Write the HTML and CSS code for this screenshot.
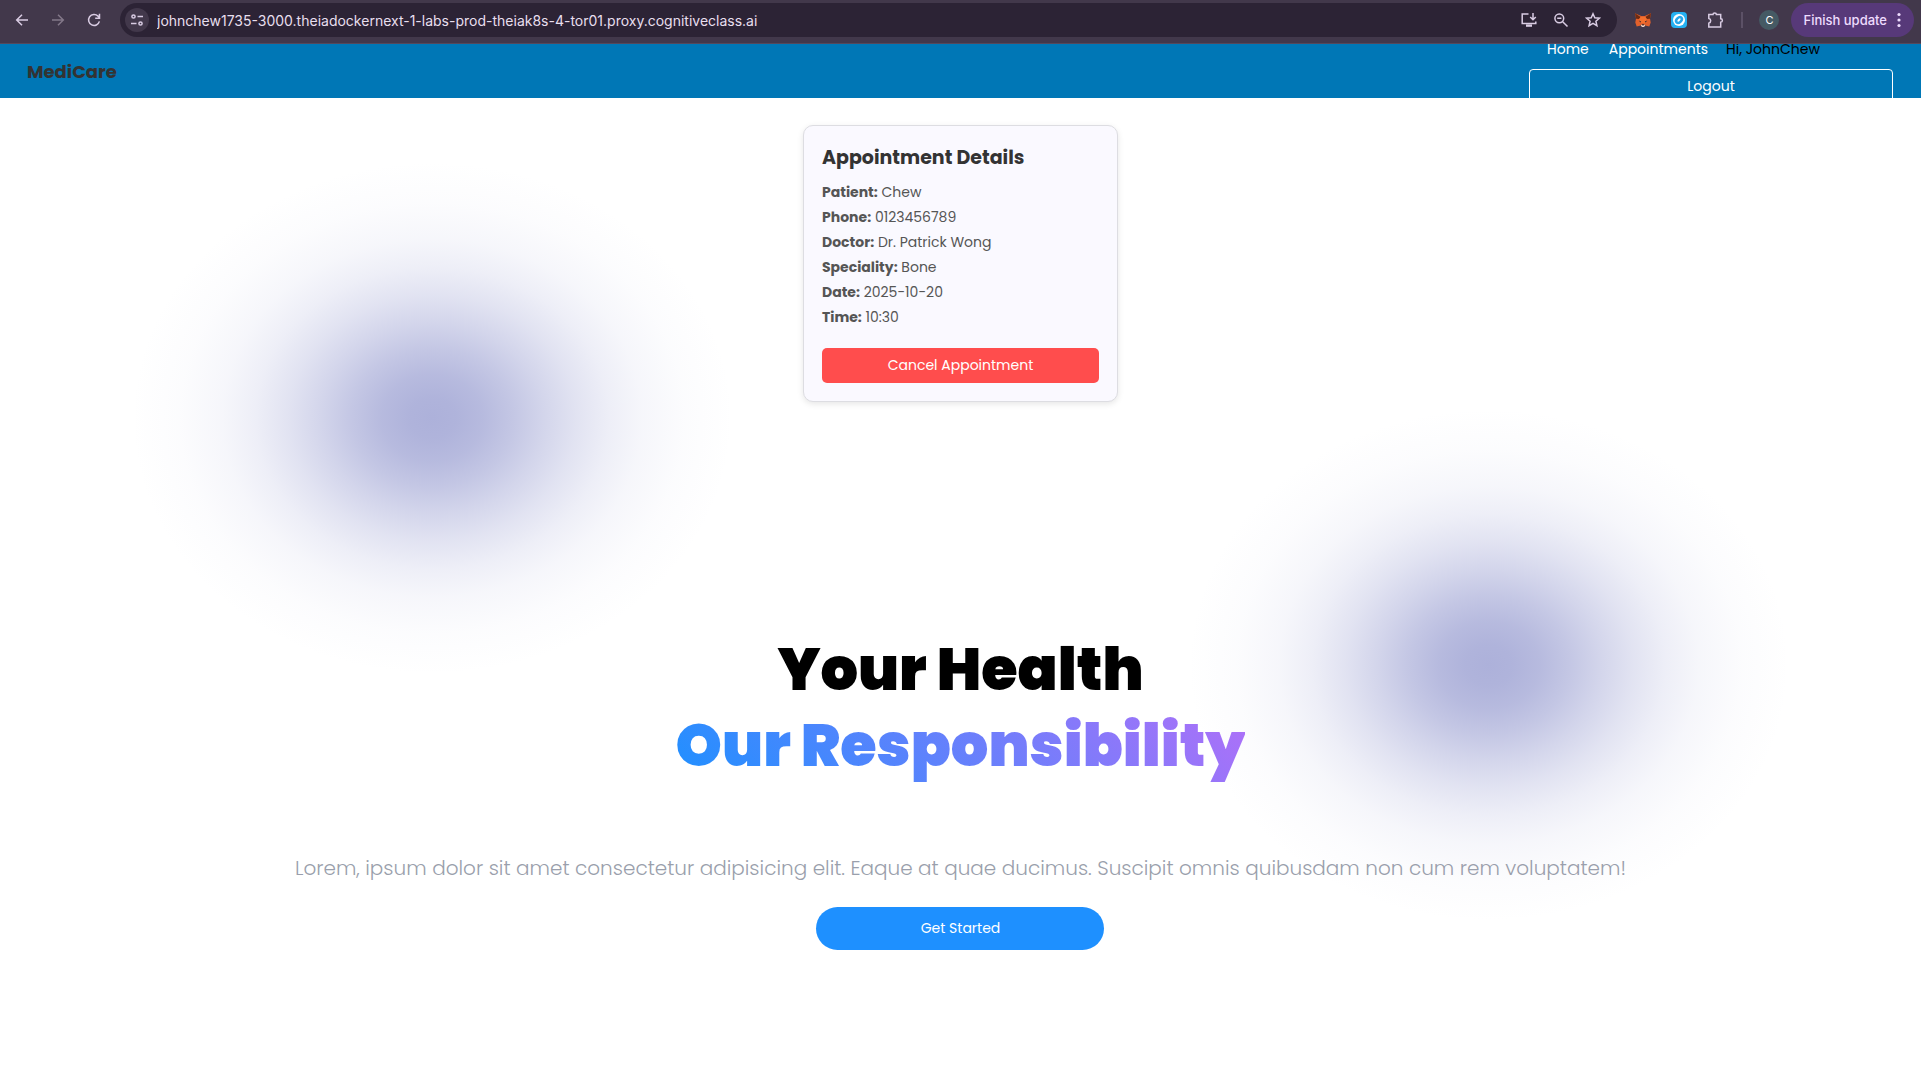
FILE: index.html
```
<!DOCTYPE html>
<html lang="en">
<head>
<meta charset="utf-8">
<meta name="viewport" content="width=device-width, initial-scale=1">
<title>MediCare</title>
<link rel="stylesheet" href="styles.css">
</head>
<body>
<div class="toolbar">
  <div class="toolbar-nav">
    <button class="icon-btn" aria-label="Back"><svg width="16" height="16" viewBox="0 0 16 16"><path d="M14 8H3M8 2.7 2.7 8 8 13.3"/></svg></button>
    <button class="icon-btn icon-btn-off" aria-label="Forward"><svg width="16" height="16" viewBox="0 0 16 16"><path d="M2 8h11M8 2.7 13.3 8 8 13.3"/></svg></button>
    <button class="icon-btn" aria-label="Reload"><svg width="16" height="16" viewBox="0 0 16 16"><path d="M13.4 9.4A5.5 5.5 0 1 1 12 4.1L13.5 5.7M13.5 1.8v4.4H9.2"/></svg></button>
  </div>
  <div class="address">
    <button class="site-info" aria-label="Site information"><svg width="14" height="14" viewBox="0 0 14 14"><circle cx="3.5" cy="3.5" r="1.6"/><path d="M7.5 3.5H13M1 10.5h5.5"/><circle cx="10.5" cy="10.5" r="1.6"/></svg></button>
    <input class="url" type="text" aria-label="Address" value="johnchew1735-3000.theiadockernext-1-labs-prod-theiak8s-4-tor01.proxy.cognitiveclass.ai">
    <div class="address-actions">
      <button class="icon-btn" aria-label="Install app"><svg width="18" height="16" viewBox="0 0 18 16"><path d="M8.5 2H2.2v9.6h13.6V9.5"/><path d="M13 1v6.5M10.2 5 13 7.7 15.8 5"/><path d="M6 13.6h6" stroke-width="2.4"/></svg></button>
      <button class="icon-btn" aria-label="Zoom"><svg width="16" height="16" viewBox="0 0 16 16"><circle cx="6.3" cy="6.3" r="4.4"/><path d="m9.7 9.7 4.8 4.8M4.2 6.3h4.2"/></svg></button>
      <button class="icon-btn" aria-label="Bookmark"><svg width="16" height="16" viewBox="0 0 16 16"><path d="m8 1.8 1.8 4 4.5.4-3.4 3 1 4.4L8 11.3l-3.9 2.3 1-4.4-3.4-3 4.5-.4z"/></svg></button>
    </div>
  </div>
  <div class="extensions">
    <button class="icon-btn" aria-label="MetaMask"><svg class="fill" width="18" height="16" viewBox="0 0 18 16"><path fill="#e2602b" d="M1 1.2 7.2 4h3.6L17 1.2l-1 5.3.7 4-1.4 4-4.2-1-1.1 1.3H8l-1.1-1.3-4.2 1-1.4-4 .7-4z"/><path fill="#6e2b12" d="M1 1.2 6.6 5 5.2 7 2 6.8zM17 1.2 11.4 5l1.4 2 3.2-.2z"/><path fill="#f5702e" d="m5.2 7 1.4-2h4.8l1.4 2L11 11H7z"/><path fill="#2b2a33" d="m4.8 8.6 2.4 1-.8.9zM13.2 8.6l-2.4 1 .8.9zM7.8 12.2h2.4v1.2H7.8z"/><path fill="#e6d6cf" d="m6.9 13.5.8-1 .4 1.1h1.8l.4-1.1.8 1L10 15H8z"/></svg></button>
    <button class="icon-btn" aria-label="Wallet extension"><svg class="fill" width="16" height="16" viewBox="0 0 16 16"><rect width="16" height="16" rx="4" fill="#25b1f2"/><circle cx="8" cy="8" r="6" fill="#fff"/><ellipse cx="8" cy="8" rx="4.6" ry="3.5" transform="rotate(-45 8 8)" fill="#25a6ea"/><ellipse cx="8" cy="8" rx="2" ry="1" transform="rotate(-45 8 8)" fill="#fff"/></svg></button>
    <button class="icon-btn" aria-label="Extensions"><svg width="17" height="18" viewBox="0 0 17 18"><path d="M1.8 3.6H6a1.7 1.7 0 0 1 3.4 0h4.3v4.2a1.7 1.7 0 0 1 0 3.4v4.7H1.8v-3.7a2.4 2.4 0 0 0 0-4.7z"/></svg></button>
  </div>
  <span class="divider"></span>
  <button class="avatar" aria-label="Profile C">C</button>
  <button class="update">Finish update<svg width="4" height="16" viewBox="0 0 4 16"><circle cx="2" cy="2.5" r="1.6"/><circle cx="2" cy="8" r="1.6"/><circle cx="2" cy="13.5" r="1.6"/></svg></button>
</div>

<header class="site-header">
  <a class="brand" href="#">MediCare</a>
  <nav class="site-nav">
    <div class="nav-row">
      <div class="nav-links">
        <a href="#">Home</a>
        <a href="#">Appointments</a>
      </div>
      <span class="greeting">Hi, JohnChew</span>
    </div>
    <button class="logout">Logout</button>
  </nav>
</header>

<main class="page">
  <section class="card">
    <h3 class="card-title">Appointment Details</h3>
    <p class="card-row"><strong>Patient:</strong> Chew</p>
    <p class="card-row"><strong>Phone:</strong> 0123456789</p>
    <p class="card-row"><strong>Doctor:</strong> Dr. Patrick Wong</p>
    <p class="card-row"><strong>Speciality:</strong> Bone</p>
    <p class="card-row"><strong>Date:</strong> 2025-10-20</p>
    <p class="card-row"><strong>Time:</strong> 10:30</p>
    <button class="cancel">Cancel Appointment</button>
  </section>

  <section class="hero">
    <h1 class="hero-title">Your Health <span class="hero-accent">Our Responsibility</span></h1>
    <p class="hero-text">Lorem, ipsum dolor sit amet consectetur adipisicing elit. Eaque at quae ducimus. Suscipit omnis quibusdam non cum rem voluptatem!</p>
    <button class="start">Get Started</button>
  </section>
</main>
</body>
</html>
```
FILE: styles.css
```
* {
  box-sizing: border-box;
  margin: 0;
}

body {
  min-height: 100vh;
  display: flex;
  flex-direction: column;
  background: #fff;
  font-family: Poppins, Inter, "Open Sans", sans-serif;
  font-size: 14px;
}

button,
input {
  border: 0;
  padding: 0;
  background: none;
  color: inherit;
  font: inherit;
}

a {
  color: inherit;
  text-decoration: none;
}

/* Browser toolbar */
.toolbar {
  position: relative;
  z-index: 1;
  display: flex;
  align-items: center;
  height: 44px;
  padding: 0 7px 3px 12px;
  background: #42384b;
  border-bottom: 1px solid #54495c;
  color: #d9cce3;
  font-family: Inter, sans-serif;
}

.toolbar svg {
  display: block;
  fill: none;
  stroke: currentColor;
  stroke-width: 1.5;
}

.toolbar .fill {
  stroke: none;
}

.icon-btn {
  display: grid;
  place-items: center;
  width: 20px;
  height: 20px;
}

.icon-btn-off {
  color: #837889;
}

.toolbar-nav {
  display: flex;
  gap: 16px;
}

.address {
  flex: 1;
  display: flex;
  align-items: center;
  height: 34px;
  margin-left: 16px;
  padding: 0 14px 0 5px;
  border-radius: 17px;
  background: #2c2335;
}

.site-info {
  display: grid;
  place-items: center;
  width: 24px;
  height: 24px;
  border-radius: 50%;
  background: #42384b;
}

.url {
  flex: 1;
  min-width: 0;
  margin-left: 8px;
  color: #e8dfee;
  font-size: 14px;
}

.address-actions {
  display: flex;
  gap: 12px;
}

.extensions {
  display: flex;
  gap: 16px;
  margin-left: 16px;
}

.divider {
  width: 2px;
  height: 16px;
  margin: 0 16px;
  background: #5c5166;
}

.avatar {
  width: 20px;
  height: 20px;
  border-radius: 50%;
  background: #455a64;
  color: #fff;
  font-size: 11px;
}

.update {
  display: flex;
  align-items: center;
  gap: 10px;
  height: 34px;
  margin-left: 12px;
  padding: 0 13px 0 12px;
  border-radius: 17px;
  background: #573979;
  color: #eedcfe;
  font-size: 13px;
  font-weight: 500;
}

.update svg {
  fill: currentColor;
  stroke: none;
}

/* Site header */
.site-header {
  display: flex;
  align-items: center;
  justify-content: space-between;
  height: 54px;
  padding: 0 28px 0 27px;
  overflow: hidden;
  background: #0077b6;
}

.brand {
  color: #333;
  font-size: 18px;
  font-weight: 700;
}

.site-nav {
  display: flex;
  flex-direction: column;
  gap: 9px;
  width: 364px;
  color: #fff;
}

.nav-row {
  display: flex;
  gap: 18px;
  padding-left: 18px;
  line-height: 22px;
}

.nav-links {
  display: flex;
  gap: 20px;
}

.greeting {
  color: #000;
}

.logout {
  height: 35px;
  border: 1px solid #fff;
  border-radius: 4px;
}

/* Page body with two soft glows */
.page {
  --glow: rgb(173 177 218) 0%, rgb(173 177 218 / 97%) 8%,
    rgb(173 177 218 / 88%) 17%, rgb(173 177 218 / 72%) 27%,
    rgb(173 177 218 / 54%) 37%, rgb(173 177 218 / 36%) 48%,
    rgb(173 177 218 / 21%) 59%, rgb(173 177 218 / 11%) 70%,
    rgb(173 177 218 / 4%) 84%, rgb(173 177 218 / 0%) 100%;
  flex: 1;
  display: flex;
  flex-direction: column;
  align-items: center;
  padding: 27px;
  background:
    radial-gradient(300px 256px at 22.5% 320px, var(--glow)),
    radial-gradient(300px 256px at 77.5% 567px, var(--glow));
}

.card {
  display: flex;
  flex-direction: column;
  width: 315px;
  padding: 18px;
  border: 1px solid #dddde2;
  border-radius: 10px;
  background: #faf9ff;
  box-shadow: 0 2px 6px rgb(0 0 0 / 10%);
  color: #555;
}

.card-title {
  margin-bottom: 8px;
  color: #333;
  font-size: 19px;
  line-height: 28px;
}

.card-row {
  line-height: 25px;
}

.cancel {
  height: 35px;
  margin-top: 18px;
  border-radius: 5px;
  background: #ff4d4d;
  color: #fff;
}

.hero {
  display: flex;
  flex-direction: column;
  align-items: center;
  margin-top: 230px;
  text-align: center;
}

.hero-title {
  color: #000;
  font-size: 59px;
  font-weight: 900;
  line-height: 76px;
}

.hero-accent {
  display: block;
  background: linear-gradient(45deg, #1e90ff, #b070f8);
  background-clip: text;
  -webkit-background-clip: text;
  color: transparent;
}

.hero-text {
  margin: 69px 0 24px;
  color: #9a9fac;
  font-size: 20px;
  font-weight: 300;
  line-height: 30px;
}

.start {
  width: 288px;
  height: 43px;
  border-radius: 22px;
  background: #1e90ff;
  color: #fff;
}
```
